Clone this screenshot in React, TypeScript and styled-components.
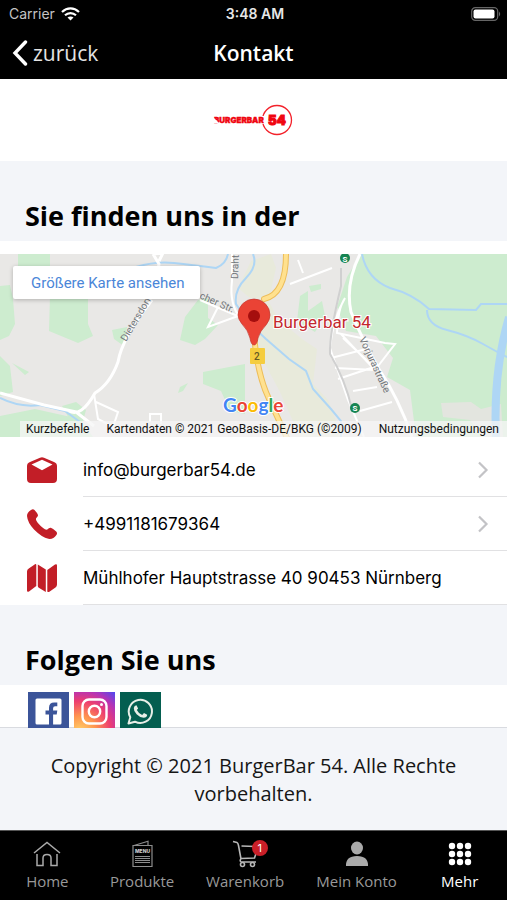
import React from "react";
import styled, { createGlobalStyle } from "styled-components";

const Global = createGlobalStyle`
  * { box-sizing: border-box; }
  html, body, #root { height: 100%; }
  body { margin: 0; background: #f3f5f9; color: #000; font-family: "Open Sans", "Noto Sans", sans-serif; }
  button { font: inherit; color: inherit; background: none; border: 0; padding: 0; cursor: pointer; }
  a { color: inherit; text-decoration: none; }
  h1, h2, p, ul { margin: 0; padding: 0; }
  svg { display: block; flex: none; }
`;

const Screen = styled.div`
  min-height: 100%;
  display: flex;
  flex-direction: column;
`;

const StatusBar = styled.div`
  display: grid;
  grid-template-columns: 1fr auto 1fr;
  align-items: center;
  height: 27px;
  padding: 0 6px 0 9px;
  background: #000;
  color: #e6e6e6;
  font: 14px/16px Inter, sans-serif;
`;

const Carrier = styled.span`
  display: flex;
  align-items: center;
  gap: 6px;
  color: #c4c4c4;
`;

const Clock = styled.time`
  font-weight: 600;
`;

const Battery = styled.span`
  justify-self: end;
`;

const NavBar = styled.header`
  display: grid;
  grid-template-columns: 1fr auto 1fr;
  align-items: center;
  height: 52px;
  padding: 0 12px;
  background: #000;
  color: #fff;
`;

const BackButton = styled.button`
  && { display: flex; font-size: 21px; color: #e4e4e4; }
  align-items: center;
  gap: 5px;
  line-height: 28px;
`;

const Title = styled.h1`
  font-size: 21px;
  line-height: 28px;
  font-weight: 600;
`;

const LogoBand = styled.div`
  display: flex;
  justify-content: center;
  align-items: center;
  height: 82px;
  background: #fff;
`;

const SectionTitle = styled.h2`
  height: 80px;
  padding: 36px 25px 0;
  background: #f3f5f9;
  font-size: 27px;
  line-height: 38px;
  font-weight: 700;
`;

const MapBand = styled.section`
  padding: 13px 0 6px;
  background: #fff;
`;

const MapFrame = styled.div`
  position: relative;
  height: 183px;
  overflow: hidden;
  background: #e8e8e6;
  font-family: Roboto, sans-serif;
`;

const MapDrawing = styled.svg`
  width: 100%;
  height: 100%;
`;

const LargerMap = styled.a`
  position: absolute;
  top: 12px;
  left: 13px;
  padding: 7px 16px 6px 18px;
  border-radius: 2px;
  background: #fff;
  box-shadow: 0 1px 4px rgba(0, 0, 0, 0.25);
  color: #4a86d8;
  font-size: 15px;
  line-height: 20px;
`;

const MapFooter = styled.div`
  position: absolute;
  right: 0;
  bottom: 0;
  display: flex;
  gap: 17px;
  padding: 0 8px 0 6px;
  background: rgba(245, 245, 245, 0.75);
  font-size: 12px;
  line-height: 16px;
  color: #111;
  white-space: nowrap;
`;

const Contacts = styled.ul`
  list-style: none;
  background: #fff;
`;

const Contact = styled.li`
  display: flex;
  align-items: center;
  padding-left: 27px;
`;

const ContactLink = styled.a`
  flex: 1;
  display: flex;
  align-items: center;
  justify-content: space-between;
  height: 54px;
  margin-left: 26px;
  padding-right: 18px;
  border-bottom: 1px solid #e1e1e3;
  font: 17px/22px Inter, sans-serif;
`;

const Social = styled.div`
  display: flex;
  gap: 5px;
  height: 43px;
  padding: 7px 28px 0;
  background: #fff;
  border-bottom: 1px solid #d9dbe0;
`;

const SocialTile = styled.a<{ $fill: string }>`
  display: flex;
  justify-content: center;
  align-items: center;
  width: 41px;
  height: 36px;
  padding-top: 2px;
  background: ${(p) => p.$fill};
`;

const Copyright = styled.footer`
  flex: 1;
  padding: 24px 40px 0;
  text-align: center;
  font-size: 20px;
  line-height: 28px;
  color: #161616;
`;

const TabBar = styled.nav`
  display: grid;
  grid-template-columns: 17fr 17fr 20fr 20fr 17fr;
  height: 70px;
  padding-top: 9px;
  background: #000;
  border-top: 1px solid #555;
`;

const Tab = styled.button<{ $active?: boolean }>`
  && { color: ${(p) => (p.$active ? "#fff" : "#999")}; font-size: 15px; }
  display: flex;
  flex-direction: column;
  align-items: center;
  gap: 3px;
  height: 51px;
  line-height: 20px;
`;

const TabIcon = styled.span`
  position: relative;
  height: 28px;
  display: flex;
  align-items: center;
`;

const CartBadge = styled.span`
  position: absolute;
  top: 0;
  right: -9px;
  width: 16px;
  height: 16px;
  border-radius: 50%;
  background: #c91f28;
  color: #fff;
  font: 11px/16px Inter, sans-serif;
`;

const Logo = () => (
  <svg width="82" height="34" viewBox="0 0 82 34" role="img" aria-label="Burgerbar 54">
    <circle cx="64" cy="17" r="14.5" fill="none" stroke="#f3222b" strokeWidth="1.3" />
    <path d="M47 13h5v8h-5z" fill="#fff" />
    <g fill="#f00510" stroke="#f00510" fontFamily="Inter, sans-serif" fontWeight="900">
      <text x="1" y="20" fontSize="8" strokeWidth="0.4">BURGERBAR</text>
      <text x="55" y="22" fontSize="13" strokeWidth="1">54</text>
    </g>
    <path d="M0 14l6 6H0z" fill="#fff" />
  </svg>
);

const WifiIcon = () => (
  <svg width="19" height="14" viewBox="0 0 19 14" fill="none" stroke="#fff" strokeWidth="2.2">
    <path d="M1 5C6 .2 13 .2 18 5M4 8.3c3.2-3 7.800-3 11 0" />
    <path d="M9.500 13.500L6.500 10.500c1.600-1.500 4.400-1.500 6 0z" fill="#fff" stroke="none" />
  </svg>
);

const BatteryIcon = () => (
  <svg width="30" height="14" viewBox="0 0 30 14">
    <rect x=".7" y=".7" width="26" height="12.600" rx="3.600" fill="none" stroke="#666" strokeWidth="1.200" />
    <rect x="2.500" y="2.500" width="21" height="9" rx="2" fill="#fff" />
    <path d="M28 4.500q2.400 2.500 0 5z" fill="#666" />
  </svg>
);

const BackIcon = () => (
  <svg width="16" height="26" viewBox="0 0 16 26" fill="none" stroke="#fff" strokeWidth="3.400" strokeLinecap="round">
    <path d="M13.500 2L3 13l10.500 11" />
  </svg>
);

const Chevron = () => (
  <svg width="12" height="18" viewBox="0 0 12 18" fill="none" stroke="#c3c3c6" strokeWidth="2.200">
    <path d="M2 1.500L9.500 9 2 16.500" />
  </svg>
);

const MailIcon = () => (
  <svg width="30" height="26" viewBox="0 0 30 26" fill="#c21e27">
    <path fillRule="evenodd" d="M3 5L13 .7q2-1 4 0L27 5q3 1.200 3 4v13q0 4-4 4H4q-4 0-4-4V9Q0 6.200 3 5zM4.500 7.500L15 13.300l10.500-5.800L15 2.800z" />
  </svg>
);

const PhoneIcon = () => (
  <svg width="30" height="30" viewBox="0 0 30 30" fill="#c21e27">
    <path d="M4 1q2-1.500 3.500 0 3 3.200 3.500 5 .2 1.500-1.700 3-.7.900 0 2.400 1.600 3.200 6.800 7.600 2.500 2.100 4.200 1.500 1.700-1.900 3.500-1.700 2 .5 5.400 3.700 1.500 1.600.2 3.400-3.200 4.700-8 3.900Q15 28.500 7 20.500.5 13.500 0 7 0 3.300 4 1z" />
  </svg>
);

const FoldedMapIcon = () => (
  <svg width="30" height="28" viewBox="0 0 30 28" fill="#c21e27">
    <path d="M1.800 4.500L8 .2q1.300-.5 1.300.7v21L2 27.500q-2 .9-2-1V7.500q0-1.900 1.800-3zM10.800.5l8 5V28l-7-4.300q-1-.6-1-2zM20.300 6L28 .5q2-1 2 1v19q0 1.900-1.500 3L22 28q-1.700.6-1.700-1z" />
  </svg>
);

const FacebookIcon = () => (
  <svg width="27" height="27" viewBox="0 0 27 27">
    <rect x=".5" y=".5" width="26" height="26" rx="1.500" fill="#fff" />
    <path d="M14 27V16.500h-3.500v-4H14V9.800Q14 4.500 19.300 4.500h3v3.800h-2.200q-2 0-2 2v2.200h4.200l-.6 4h-3.600V27z" fill="#3b5499" />
  </svg>
);

const InstagramIcon = () => (
  <svg width="27" height="27" viewBox="0 0 27 27" fill="none" stroke="#fff" strokeWidth="2.400">
    <rect x="1.500" y="1.500" width="24" height="24" rx="6.500" />
    <circle cx="13.500" cy="13.500" r="5.700" />
    <circle cx="20.500" cy="6.500" r="1.500" fill="#fff" stroke="none" />
  </svg>
);

const WhatsappIcon = () => (
  <svg width="27" height="27" viewBox="0 0 27 27" fill="none" stroke="#e8efe8">
    <path d="M1.500 25.500l1.800-6.300A11.600 11.600 0 1 1 8 23.700z" strokeWidth="2" strokeLinejoin="round" />
    <path d="M9.500 7.200l1.600 3.200-1.300 1.600q1.800 3.600 5.400 5l1.800-1.900 3.200 1.600q-.2 3-3.600 3.100-3.600-.2-7-3.600-3.100-3.300-2.800-6.200.4-2.600 2.700-2.800z" fill="#e8efe8" stroke="none" />
  </svg>
);

const HomeIcon = () => (
  <svg width="28" height="26" viewBox="0 0 28 26" fill="none" stroke="#aaa" strokeWidth="1.500">
    <path d="M1 12L14 1.500 27 12M4 13v11.500h6V17q0-3.500 4-3.500t4 3.500v7.500h6V13" />
  </svg>
);

const MenuCardIcon = () => (
  <svg width="21" height="28" viewBox="0 0 21 28" fill="none" stroke="#8d8d8d" strokeWidth="1.200">
    <path d="M1 5.500h19v21H1zM2 5.500L16 1.200v4M3 16.500h15M3 18.500h15M3 20.500h15M3 22.500h15" />
    <text x="10.500" y="12.500" textAnchor="middle" fontFamily="Inter, sans-serif" fontSize="5" fontWeight="800" fill="#ccc" stroke="none">MENU</text>
  </svg>
);

const CartIcon = () => (
  <svg width="27" height="28" viewBox="0 0 27 28" fill="none" stroke="#b7b7b7" strokeWidth="1.600">
    <path d="M1 1.500l4 1q1 .3 1.500 3L9 19M9.500 6L25 6.500M24.500 12L22.500 18 9 18.500M9 18.500q-2 3.500 1 3.500h14" />
    <circle cx="10.500" cy="24.500" r="2" />
    <circle cx="20.500" cy="24.500" r="2" />
  </svg>
);

const PersonIcon = () => (
  <svg width="24" height="26" viewBox="0 0 24 26" fill="#aaa">
    <ellipse cx="12" cy="7" rx="6" ry="6.500" />
    <path d="M1 25q-.5-10 11-10t11 10z" />
  </svg>
);

const GridIcon = () => (
  <svg width="24" height="24" viewBox="0 0 24 24" fill="#fff">
    {[4, 12, 20].map((y) => [4, 12, 20].map((x) => <circle key={`${x}-${y}`} cx={x} cy={y} r="3.200" />))}
  </svg>
);

const AreaMap = () => (
  <MapDrawing viewBox="0 0 507 183" preserveAspectRatio="xMidYMid slice" role="img" aria-label="Karte">
    <rect width="507" height="183" fill="#e9e8e6" />
    <g fill="#cdeccf">
      <path d="M18 0h32v14H18zM0 32l10-1 3 14 2 25-6 12-9 4zM50 42l38-4v32l5 12-15 7-29-12zM0 102l10 10 3 26-13 4zM0 162l35-7 45 10 13 18H0zM198 46l10-2v20l10 7-13 14-10 6-15-5 5-23zM203 118l42-8v50l-15-3-9-20-18-7zM12 109l17 9-4 3zM62 152l14-4 10 8-4 15-12-5zM112 76l15-3-3 19-10-7zM180 133l8-4-5 8-5 2z" />
      <path d="M361 0h146v183h-91l-6-47-23-13 6-19-17-22-30-5-9-24 10-30zM300 42l8-5v20l14-10 3 15-10 16-18-11zM309 32l12-2v5l-10 3z" />
    </g>
    <g fill="#e8eadb">
      <path d="M251 7l20-7 5 14-7 31-19-1-12-10zM268 46l10 19 24 20 15 10-4 35 15 16 14 37h-42l-20-45-16-30-9-34z" />
    </g>
    <path d="M441 149l30-1 10 7 20-5 2 33h-20l-13-17-27-3z" fill="#e3e5df" />
    <g fill="none" stroke="#aed6f5" strokeWidth="2">
      <path d="M136 13q20-6 38-4t42 5q10-4 12-14M0 144q20 10 40 7l25 6 15 11M253 0q5 12-7 24t-10 26l14 20 16 15 23 20 17 12 7 18 18 20 10 12v16M362 0q5 25 28 34 23 6 39 21l47 1 5-6h26M427 56q0 15 20 20t36 14 24 13" />
      <path d="M496 183q-3-65 13-120" strokeWidth="8" />
    </g>
    <g fill="none" stroke="#fff" strokeWidth="2">
      <path d="M153 0l6 10-3 17M153 0l10-1-4 8M152 46q-30 38-34 62-8 22-23 31-14 25-26 18M0 139l44 12 32 7 18 14" strokeWidth="3" />
      <path d="M232 0v27q-3 24 9 38M238 62l-30 11 10-20M200 46l40 17M94 140l4 25 15 8 5-15-22-10M150 168v-8h11v10" />
      <path d="M360 0q-15 30-9 58 10 25 28 57 20 30 33 68" strokeWidth="3" />
      <path d="M290 30l42-16M298 6l5 13M345 44q-12 20-15 50l18 52 16 37M345 44q-7 10-8 35l48 10 10 1-20 26-40-2M341 80l33 35M331 104l39-10M338 125l36-12-31-29M353 137l24-4M360 157l32-9" />
    </g>
    <path d="M341 14v18q-12 50-11 68 15 25 22 55" fill="none" stroke="#d0d0d0" strokeWidth="2" />
    <g fill="none" strokeLinecap="round">
      <path d="M286 0q0 40-22 45M254 80q3 40 15 65l19 41" stroke="#edbd59" strokeWidth="6" />
      <path d="M286 0q0 40-22 45M254 80q3 40 15 65l19 41" stroke="#ffe18f" strokeWidth="4" />
    </g>
    <rect x="250" y="94" width="15" height="16" rx="1" fill="#f5cd3e" />
    <g fontFamily="Roboto, sans-serif" fill="#72777b" fontSize="10">
      <text transform="translate(126 88) rotate(-59)">Dietersdorf</text>
      <text transform="translate(238 25) rotate(-88)">Draht</text>
      <text transform="translate(199 44) rotate(24)">cher Str.</text>
      <text transform="translate(359 85) rotate(65)">Vorjurastraße</text>
      <text x="254" y="106" fill="#665a25" fontWeight="500">2</text>
    </g>
    <path d="M254 91q-3 0-4-7-2-8-8-14-4-5-4-9a16 16 0 0 1 32 0q0 5-4 10-6 6-8 13-1 7-4 7z" fill="#ea4335" stroke="#c4382f" strokeWidth=".7" />
    <circle cx="254" cy="62" r="6" fill="#a50e0e" />
    <text x="273" y="74" fontFamily="Roboto, sans-serif" fontSize="17" fill="#c3282d" stroke="#fff" strokeWidth="2" paintOrder="stroke">Burgerbar 54</text>
    <text x="223" y="158" fontFamily="Lato, sans-serif" fontSize="19" fontWeight="700" stroke="#fff" strokeWidth="2" paintOrder="stroke">
      <tspan fill="#4285f4">G</tspan><tspan fill="#ea4335">o</tspan><tspan fill="#fbbc05">o</tspan><tspan fill="#4285f4">g</tspan><tspan fill="#34a853">l</tspan><tspan fill="#ea4335">e</tspan>
    </text>
    <g fontFamily="Roboto, sans-serif" fontSize="8" fontWeight="700" textAnchor="middle">
      <circle cx="345" cy="4" r="5" fill="#168451" />
      <text x="345" y="8" fill="#fff">S</text>
      <circle cx="355" cy="154" r="5" fill="#168451" />
      <text x="355" y="157" fill="#fff">S</text>
    </g>
  </MapDrawing>
);

export default function App() {
  return (
    <Screen>
      <Global />
      <StatusBar>
        <Carrier>Carrier <WifiIcon /></Carrier>
        <Clock>3:48 AM</Clock>
        <Battery><BatteryIcon /></Battery>
      </StatusBar>
      <NavBar>
        <BackButton><BackIcon />zurück</BackButton>
        <Title>Kontakt</Title>
      </NavBar>
      <LogoBand><Logo /></LogoBand>
      <SectionTitle>Sie finden uns in der</SectionTitle>
      <MapBand>
        <MapFrame>
          <AreaMap />
          <LargerMap href="#karte">Größere Karte ansehen</LargerMap>
          <MapFooter>
            <button>Kurzbefehle</button>
            <span>Kartendaten © 2021 GeoBasis-DE/BKG (©2009)</span>
            <a href="#nutzung">Nutzungsbedingungen</a>
          </MapFooter>
        </MapFrame>
      </MapBand>
      <Contacts>
        <Contact>
          <MailIcon />
          <ContactLink href="mailto:info@burgerbar54.de">info@burgerbar54.de<Chevron /></ContactLink>
        </Contact>
        <Contact>
          <PhoneIcon />
          <ContactLink href="tel:+4991181679364">+4991181679364<Chevron /></ContactLink>
        </Contact>
        <Contact>
          <FoldedMapIcon />
          <ContactLink href="#adresse">Mühlhofer Hauptstrasse 40 90453 Nürnberg</ContactLink>
        </Contact>
      </Contacts>
      <SectionTitle>Folgen Sie uns</SectionTitle>
      <Social>
        <SocialTile href="#facebook" aria-label="Facebook" $fill="#3b5499"><FacebookIcon /></SocialTile>
        <SocialTile href="#instagram" aria-label="Instagram" $fill="radial-gradient(circle at 15% 110%, #ffd36b 0%, #ff944f 30%, #ed3e70 58%, #b633b5 78%, #4b49f2 100%)"><InstagramIcon /></SocialTile>
        <SocialTile href="#whatsapp" aria-label="WhatsApp" $fill="#045e50"><WhatsappIcon /></SocialTile>
      </Social>
      <Copyright>Copyright © 2021 BurgerBar 54. Alle Rechte vorbehalten.</Copyright>
      <TabBar>
        <Tab><TabIcon><HomeIcon /></TabIcon>Home</Tab>
        <Tab><TabIcon><MenuCardIcon /></TabIcon>Produkte</Tab>
        <Tab><TabIcon><CartIcon /><CartBadge>1</CartBadge></TabIcon>Warenkorb</Tab>
        <Tab><TabIcon><PersonIcon /></TabIcon>Mein Konto</Tab>
        <Tab $active><TabIcon><GridIcon /></TabIcon>Mehr</Tab>
      </TabBar>
    </Screen>
  );
}
